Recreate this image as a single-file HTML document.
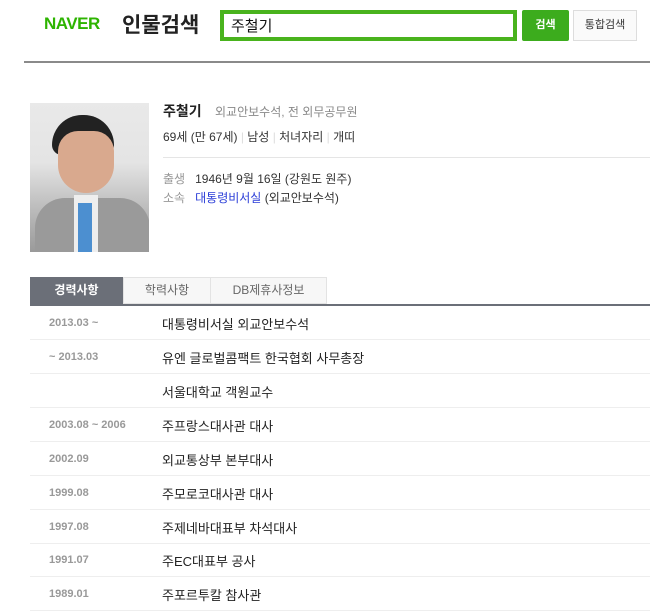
<!DOCTYPE html>
<html><head><meta charset="utf-8"><style>
*{margin:0;padding:0;box-sizing:border-box}
body{width:650px;height:600px;overflow:hidden;background:#fff;font-family:"Liberation Sans","Noto Sans CJK KR",sans-serif;position:relative;color:#222}
.a{position:absolute;white-space:nowrap}
.row{position:absolute;left:30px;width:620px;height:34px;border-bottom:1px solid #eee}
.row .d{position:absolute;left:19px;top:11px;font-size:11px;color:#999;font-weight:bold}
.row .t{position:absolute;left:132px;top:8px;font-size:13px;color:#222}
</style></head><body>
<div class="a" style="left:44px;top:14px;font-size:17px;font-weight:900;color:#2db400;letter-spacing:-0.5px">NAVER</div>
<div class="a" style="left:122px;top:9px;font-size:21px;font-weight:bold;color:#222">인물검색</div>
<div class="a" style="left:220px;top:10px;width:297px;height:31px;border:4px solid #49b31d;background:#fff"></div>
<div class="a" style="left:231px;top:15px;font-size:15px;color:#111">주철기</div>
<div class="a" style="left:522px;top:10px;width:47px;height:31px;background:#3cac1d;border-radius:2px;color:#fff;font-size:11px;font-weight:bold;text-align:center;line-height:31px">검색</div>
<div class="a" style="left:573px;top:10px;width:64px;height:31px;background:#fafafa;border:1px solid #ddd;color:#333;font-size:11px;text-align:center;line-height:29px">통합검색</div>
<div class="a" style="left:24px;top:61px;width:626px;height:2px;background:#8a8a8a"></div>

<div class="a" style="left:30px;top:103px;width:119px;height:149px;background:linear-gradient(180deg,#e9e9e9 0%,#e4e4e4 40%,#bdbdbd 70%,#9a9a9a 100%);overflow:hidden">
 <div style="position:absolute;left:22px;top:12px;width:62px;height:40px;background:#222;border-radius:30px 30px 10px 10px"></div>
 <div style="position:absolute;left:28px;top:28px;width:56px;height:62px;background:#d9a98e;border-radius:20px 20px 28px 28px"></div>
 <div style="position:absolute;left:5px;top:95px;width:115px;height:60px;background:#9a9a9a;border-radius:30px 30px 0 0"></div>
 <div style="position:absolute;left:44px;top:92px;width:24px;height:60px;background:#eee"></div>
 <div style="position:absolute;left:48px;top:100px;width:14px;height:50px;background:#4c8fd0"></div>
</div>

<div class="a" style="left:163px;top:101px;font-size:14px;font-weight:bold">주철기</div>
<div class="a" style="left:215px;top:103px;font-size:12px;color:#888">외교안보수석, 전 외무공무원</div>
<div class="a" style="left:163px;top:128px;font-size:12px;color:#333">69세 (만 67세) <span style="color:#ddd">|</span> 남성 <span style="color:#ddd">|</span> 처녀자리 <span style="color:#ddd">|</span> 개띠</div>
<div class="a" style="left:163px;top:157px;width:487px;height:1px;background:#e5e5e5"></div>
<div class="a" style="left:163px;top:170px;font-size:12px;color:#333"><span style="color:#999">출생</span>&nbsp;&nbsp; 1946년 9월 16일 (강원도 원주)</div>
<div class="a" style="left:163px;top:189px;font-size:12px;color:#333"><span style="color:#999">소속</span>&nbsp;&nbsp; <span style="color:#2a3dd8">대통령비서실</span> (외교안보수석)</div>

<div class="a" style="left:30px;top:277px;width:93px;height:27px;background:#6b6f78;color:#fff;font-size:12px;font-weight:bold;text-align:center;line-height:27px">경력사항</div>
<div class="a" style="left:123px;top:277px;width:88px;height:27px;background:#f7f7f7;border:1px solid #e3e3e3;color:#666;font-size:12px;text-align:center;line-height:25px">학력사항</div>
<div class="a" style="left:211px;top:277px;width:116px;height:27px;background:#f7f7f7;border:1px solid #e3e3e3;border-left:0;color:#666;font-size:12px;text-align:center;line-height:25px">DB제휴사정보</div>
<div class="a" style="left:30px;top:304px;width:620px;height:2px;background:#6b6f78"></div>

<div class="row" style="top:306px"><span class="d">2013.03 ~</span><span class="t">대통령비서실 외교안보수석</span></div>
<div class="row" style="top:340px"><span class="d">~ 2013.03</span><span class="t">유엔 글로벌콤팩트 한국협회 사무총장</span></div>
<div class="row" style="top:374px"><span class="d"></span><span class="t">서울대학교 객원교수</span></div>
<div class="row" style="top:408px"><span class="d">2003.08 ~ 2006</span><span class="t">주프랑스대사관 대사</span></div>
<div class="row" style="top:442px"><span class="d">2002.09</span><span class="t">외교통상부 본부대사</span></div>
<div class="row" style="top:476px"><span class="d">1999.08</span><span class="t">주모로코대사관 대사</span></div>
<div class="row" style="top:510px"><span class="d">1997.08</span><span class="t">주제네바대표부 차석대사</span></div>
<div class="row" style="top:543px"><span class="d">1991.07</span><span class="t">주EC대표부 공사</span></div>
<div class="row" style="top:577px"><span class="d">1989.01</span><span class="t">주포르투칼 참사관</span></div>
</body></html>
